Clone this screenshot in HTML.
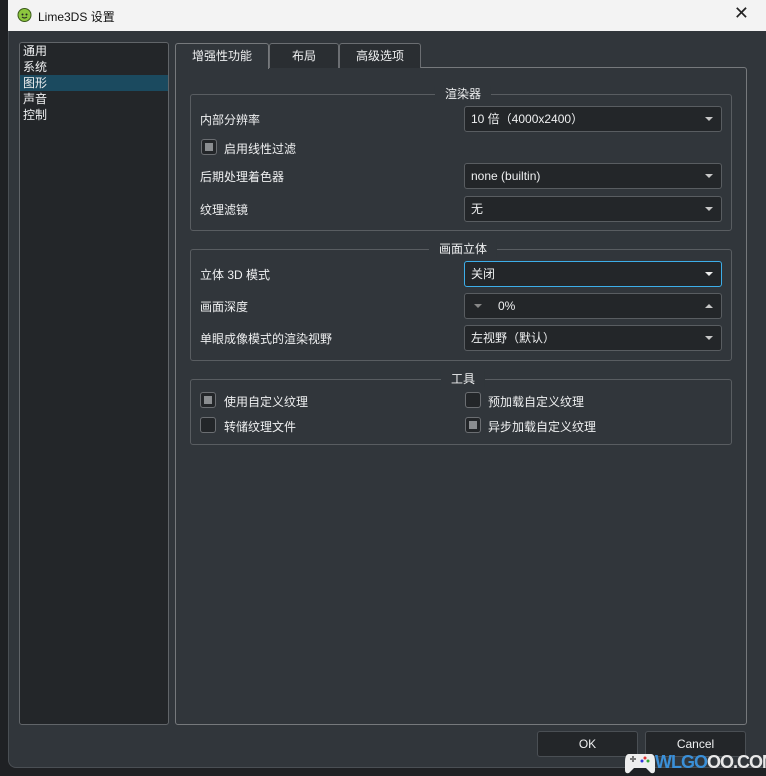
<!DOCTYPE html>
<html><head><meta charset="utf-8"><style>
*{box-sizing:border-box;margin:0;padding:0}
body{width:766px;height:776px;background:#1f2124;position:relative;overflow:hidden;font-family:"Liberation Sans","Noto Sans CJK SC",sans-serif;font-size:12px;color:#eff0f1}
.a{position:absolute}
#dlg{left:8px;top:0;width:760px;height:768px;background:#31363b;border-radius:0 0 0 8px;border-left:1px solid #4a4f54;border-bottom:1px solid #4a4f54}
#title{left:8px;top:0;width:758px;height:31px;background:#f3f3f3;color:#111;font-size:12px}
.list{left:19px;top:42px;width:150px;height:683px;background:#232629;border:1px solid #616569;border-radius:3px}
.list div{height:16px;line-height:16px;padding-left:3px}
.pane{left:175px;top:67px;width:572px;height:658px;border:1px solid #76797c;border-radius:0 3px 3px 3px}
.tab{top:43px;height:25px;line-height:25px;text-align:center;border:1px solid #6b6e72;border-bottom:none;background:#2a2e32;border-radius:3px 3px 0 0}
.grp{left:190px;width:542px;border:1px solid #595d61;border-radius:3px}
.gt{background:#31363b;padding:0 10px;transform:translateX(-50%);top:-9px;line-height:16px}
.cb{left:464px;width:258px;height:26px;background:#232629;border:1px solid #595d61;border-radius:3px;line-height:24px;padding-left:6px}
.arr{position:absolute;right:8px;top:10px;width:0;height:0;border-left:4px solid transparent;border-right:4px solid transparent;border-top:4px solid #c8c8c8}
.lbl{left:200px;line-height:16px}
.chk{width:16px;height:16px;border:1px solid #6b6e72;border-radius:3px;background:#232629}
.chk.on::after{content:"";position:absolute;left:3px;top:3px;width:8px;height:8px;background:#8a8d90}
.btn{top:731px;width:101px;height:26px;background:#232629;border:1px solid #4a4f54;border-radius:3px;text-align:center;line-height:24px}
</style></head><body>
<div id="dlg" class="a"></div>
<div id="title" class="a">
 <svg class="a" style="left:9px;top:7px" width="15" height="15" viewBox="0 0 15 15"><circle cx="7.5" cy="8" r="6.5" fill="#8cc63e" stroke="#3a5a1a"/><circle cx="5.5" cy="7.5" r="1" fill="#222"/><circle cx="9.5" cy="7.5" r="1" fill="#222"/><path d="M5 10q2.5 2 5 0" stroke="#222" fill="none"/></svg>
 <span class="a" style="left:30px;top:8px">Lime3DS 设置</span>
 <span class="a" style="right:17px;top:3px;font-size:18px;color:#222">✕</span>
</div>
<div class="a list"><div>通用</div><div>系统</div><div style="background:#1b4a5f">图形</div><div>声音</div><div>控制</div></div>
<div class="a pane"></div>
<div class="a tab" style="left:269px;width:70px">布局</div>
<div class="a tab" style="left:339px;width:82px">高级选项</div>
<div class="a tab" style="left:175px;width:94px;height:26px;background:#31363b;border-color:#76797c">增强性功能</div>

<div class="a grp" style="top:94px;height:137px"><span class="a gt" style="left:272px">渲染器</span></div>
<span class="a lbl" style="top:112px">内部分辨率</span>
<div class="a cb" style="top:106px">10 倍（4000x2400）<i class="arr"></i></div>
<div class="a chk on" style="left:201px;top:139px"></div><span class="a" style="left:224px;top:140px">启用线性过滤</span>
<span class="a lbl" style="top:169px">后期处理着色器</span>
<div class="a cb" style="top:163px">none (builtin)<i class="arr"></i></div>
<span class="a lbl" style="top:202px">纹理滤镜</span>
<div class="a cb" style="top:196px">无<i class="arr"></i></div>

<div class="a grp" style="top:249px;height:112px"><span class="a gt" style="left:272px">画面立体</span></div>
<span class="a lbl" style="top:267px">立体 3D 模式</span>
<div class="a cb" style="top:261px;border-color:#3daee9">关闭<i class="arr" style="border-top-color:#eee"></i></div>
<span class="a lbl" style="top:299px">画面深度</span>
<div class="a cb" style="top:293px"><i class="arr" style="left:9px;right:auto;border-top-color:#888"></i><span style="padding-left:27px">0%</span><i class="arr" style="border-top:none;border-bottom:4px solid #c8c8c8"></i></div>
<span class="a lbl" style="top:331px">单眼成像模式的渲染视野</span>
<div class="a cb" style="top:325px">左视野（默认）<i class="arr"></i></div>

<div class="a grp" style="top:379px;height:66px"><span class="a gt" style="left:272px">工具</span></div>
<div class="a chk on" style="left:200px;top:392px"></div><span class="a" style="left:224px;top:393px">使用自定义纹理</span>
<div class="a chk" style="left:200px;top:417px"></div><span class="a" style="left:224px;top:418px">转储纹理文件</span>
<div class="a chk" style="left:465px;top:392px"></div><span class="a" style="left:488px;top:393px">预加载自定义纹理</span>
<div class="a chk on" style="left:465px;top:417px"></div><span class="a" style="left:488px;top:418px">异步加载自定义纹理</span>

<div class="a btn" style="left:537px">OK</div>
<div class="a btn" style="left:645px">Cancel</div>
<svg class="a" style="left:625px;top:750px" width="30" height="24" viewBox="0 0 30 24"><path d="M4 4h22q4 0 4 8v8q0 4-4 3l-5-5H9l-5 5q-4 1-4-3v-8q0-8 4-8z" fill="#eee"/><rect x="5" y="8" width="6" height="2" fill="#777"/><rect x="7" y="6" width="2" height="6" fill="#777"/><circle cx="20" cy="8" r="1.5" fill="#d33"/><circle cx="23" cy="11" r="1.5" fill="#3a3"/><circle cx="17" cy="11" r="1.5" fill="#33d"/></svg>
<span class="a" style="left:655px;top:752px;font-size:18px;font-weight:bold;color:#e8e8e8;letter-spacing:-1px;line-height:20px"><span style="color:#3a8fd8">WLGO</span>OO.COM</span>
</body></html>
